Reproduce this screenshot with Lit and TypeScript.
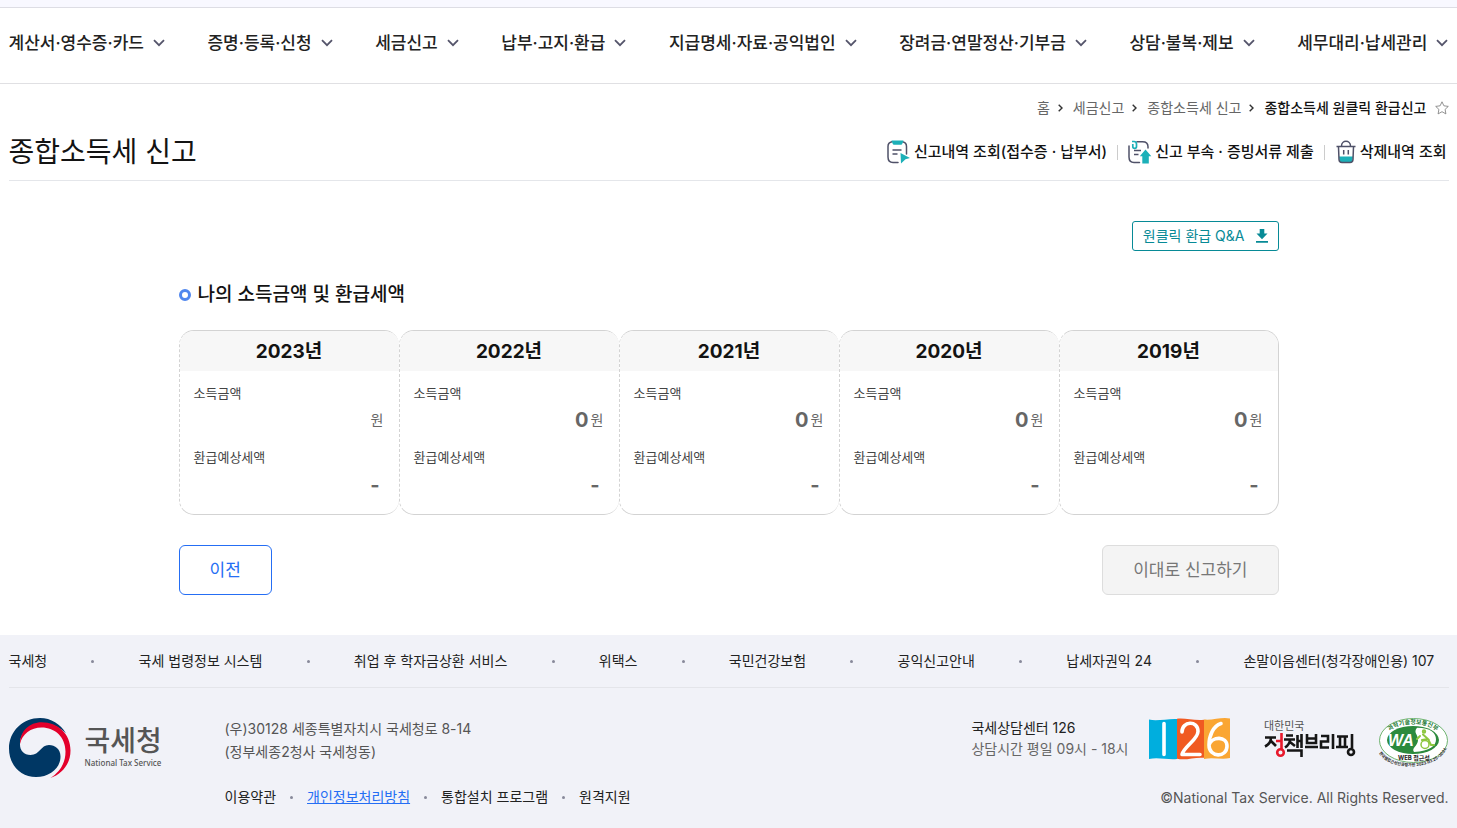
import { LitElement, html, css } from "lit";
import { customElement } from "lit/decorators.js";

const MENU = ["계산서·영수증·카드", "증명·등록·신청", "세금신고", "납부·고지·환급", "지급명세·자료·공익법인", "장려금·연말정산·기부금", "상담·불복·제보", "세무대리·납세관리"];
const CRUMBS = ["홈", "세금신고", "종합소득세 신고"];
const YEARS = [
  { year: 2023, income: "" },
  { year: 2022, income: "0" },
  { year: 2021, income: "0" },
  { year: 2020, income: "0" },
  { year: 2019, income: "0" },
];
const SITES = ["국세청", "국세 법령정보 시스템", "취업 후 학자금상환 서비스", "위택스", "국민건강보험", "공익신고안내", "납세자권익 24", "손말이음센터(청각장애인용) 107"];
const POLICIES = ["이용약관", "개인정보처리방침", "통합설치 프로그램", "원격지원"];

const chevronDown = html`<svg width="12" height="8" viewBox="0 0 12 8" aria-hidden="true"><path d="M1 1.2 6 6.2 11 1.2" fill="none" stroke="#55556b" stroke-width="1.8"/></svg>`;
const chevronRight = html`<svg width="5" height="8" viewBox="0 0 5 8" aria-hidden="true"><path d="M.7.7 4 4 .7 7.3" fill="none" stroke="#333" stroke-width="1.4"/></svg>`;
const star = html`<svg width="14" height="14" viewBox="0 0 14 14" aria-hidden="true"><path d="M7 .8 8.9 4.8 13.3 5.4 10.1 8.4 10.9 12.9 7 10.7 3.1 12.9 3.9 8.4.7 5.4 5.1 4.8Z" fill="none" stroke="#777" stroke-width=".8" stroke-linejoin="round"/></svg>`;

const listIcon = html`<svg width="24" height="24" viewBox="0 0 24 24" aria-hidden="true">
  <path d="M5 1.8C2.2 2.3 1 4 1 6.5V17c0 3.600 1.700 5.500 5 5.500h5M15.500 1.800c2.800.5 4 2.200 4 4.700v7.500" fill="none" stroke="#4f5168" stroke-width="1.500" stroke-linecap="round"/>
  <path d="M4.500.5h12l-1.200 3.200c-.3.800-.8 1.100-1.600 1.100H7.300c-.8 0-1.300-.3-1.600-1.100Z" fill="#1cb0b8"/>
  <path d="M5.500 10h9M5.500 14h5" stroke="#4f5168" stroke-width="1.500"/>
  <path d="M13.500 13 23 18 18.500 19.300 14 23.500Z" fill="#1cb0b8"/></svg>`;
const uploadIcon = html`<svg width="24" height="24" viewBox="0 0 24 24" aria-hidden="true">
  <path d="M9 1.800h5.500c3.600 0 5.500 1.600 5.500 5v1.200M1 6V17c0 3.600 1.700 5.500 5 5.500h5.500" fill="none" stroke="#4f5168" stroke-width="1.500" stroke-linecap="round"/>
  <path d="M4 1.500h2C8 1.500 8.500 2.500 8.500 4v2.500c0 2.500-3.700 2.500-3.700 0V4" fill="none" stroke="#1cb0b8" stroke-width="1.700"/>
  <path d="M6 10.500H13M6 14.500h4.500" stroke="#4f5168" stroke-width="1.500"/>
  <path d="M17.500 9.500 23.300 16.200H20.800V23.500H14.300V16.200H11.800Z" fill="#1cb0b8"/></svg>`;
const trashIcon = html`<svg width="22" height="24" viewBox="-1 0 22 24" aria-hidden="true">
  <path d="M3 16.500h14l-.6 4.500c-.2 1.200-.8 1.700-2 1.700H5.600c-1.200 0-1.800-.5-2-1.700Z" fill="#1cb0b8"/>
  <path d="M.5 6.500h19M5.500 6C5.500-.2 14.500-.2 14.500 6M2.500 7 3 19.500c.1 2.200 1 3.100 3 3.100h8c2 0 2.900-.9 3-3.100L17.500 7M7.700 10v4.500M12.300 10v4.500" fill="none" stroke="#4f5168" stroke-width="1.500"/></svg>`;
const downloadIcon = html`<svg width="12" height="14" viewBox="0 0 12 14" aria-hidden="true"><path d="M3.700 0h4.600v4.600h3.200L6 10.200.5 4.600h3.200ZM0 12h12v1.700H0Z" fill="#078a96"/></svg>`;

const emblem = html`<svg width="62" height="60" viewBox="0 0 62 60" aria-hidden="true">
  <path d="M31 0C14 0 0 13 0 30.500 0 47 11.500 59 27 59c14 0 24.500-9 24.500-20.500C51.500 31 46 27 40 27c-8.500 0-9 10-18.500 10C15 37 11 32.500 11 26.500 11 14.500 20 6 32.500 5.500c10-.4 18 3.500 24.500 10C51.500 6 42 0 31 0Z" fill="#003764"/>
  <path d="M11 26C11 13 20.500 4.300 32.500 4.300 49 4.300 61.500 16 61.500 32.500 61.500 46 53 56 41.500 60 50 54.500 56.500 46 56.500 33.500 56.500 19 46 9.500 32.500 9.500 22 9.500 13 16 11 26Z" fill="#e4002b"/></svg>`;

const hotline = html`<svg width="82" height="42" viewBox="0 0 82 42" role="img" aria-label="126">
  <path d="M0 1.500c8 2 18-1 28-.5v40c-9 1-19-2-28 0Z" fill="#00aede"/>
  <path d="M28 .8c8-1 17 2 27 1v38c-9-1-18 3-27 1Z" fill="#f05a22"/>
  <path d="M55 1.500c9 1 18-3 26-1v39.500c-8 2-17-1-26 1Z" fill="#faa633"/>
  <path d="M15 5.500v31M33 14C33 3 49 2 49 13.500c0 8-14 15-16 23h18M72 5.500C64 8 60 18 60 27c0 13 18 13 18 1C78 18 63 18 60 27" fill="none" stroke="#fff" stroke-width="3.600" stroke-linecap="round" stroke-linejoin="round"/></svg>`;

const briefing = html`<svg width="92" height="40" viewBox="0 -2 92 40" role="img" aria-label="대한민국 정책브리핑">
  <text x="0" y="10" font-size="11" fill="#555">대한민국</text>
  <g fill="none" stroke="#161616" stroke-width="2.600">
    <path d="M1 17.500h11M7 17.500c0 4-2 7-6 9M7 21l5 5M22 15.500h7M20 19.500h11M26 19.500c0 4-2 6-5 8M26 22l5 4M33.500 15v13M37.500 14v14M33.500 21h4M23 30.500h14.500v6.500M43 14v9h9v-9M43 18.500h9M41 27h13M57 16h7v5.500h-7v6h8M69 14v15M73 16.500h11M76 16.500v10M81 16.500v10M72 27h12M88 14v14"/>
    <circle cx="87" cy="32" r="3"/></g>
  <g fill="none" stroke="#e8192c" stroke-width="2.600"><path d="M12 21h5M17.500 13v16"/><circle cx="16.500" cy="32.500" r="3.300"/></g></svg>`;

const waMark = html`<svg width="72" height="50" viewBox="0 0 72 50" role="img" aria-label="과학기술정보통신부 WEB 접근성">
  <defs><path id="arc-top" d="M9 18C16 2 56 2 63 18"/><path id="arc-low" d="M2 35C13 54 60 53 70 30"/></defs>
  <ellipse cx="36.500" cy="22.500" rx="34" ry="22" fill="#fff" stroke="#4da24d" stroke-width=".8"/>
  <ellipse cx="36" cy="22" rx="26" ry="14" fill="#2c8a3d"/>
  <path d="M40 9.800C54 9.800 59 15 59 21.500S53 33 37 34C34 30 41 28 41 22S36 15 40 9.800Z" fill="#fff"/>
  <g fill="none" stroke="#8dc63f" stroke-width="2" stroke-linecap="round"><circle cx="47" cy="13.500" r="1.200"/><path d="M46 16.500 51 21l-6 1M51 21l3 6h3M43 18l-3 3"/><circle cx="48" cy="26.500" r="4" stroke-width="1.500"/></g>
  <text x="11" y="28" font-size="16" font-weight="700" font-style="italic" fill="#fff" font-family="Liberation Sans, sans-serif">WA</text>
  <text font-size="6" fill="#237a35" font-weight="700"><textPath href="#arc-top" startOffset="6">과학기술정보통신부</textPath></text>
  <text x="21" y="42" font-size="6" font-weight="700" fill="#222">WEB 접근성</text>
  <text font-size="4" font-weight="700" fill="#222"><textPath href="#arc-low">한국웹접근성인증평가원 2023.03.25~2024.03</textPath></text></svg>`;

@customElement("app-root")
export class AppRoot extends LitElement {
  static styles = css`
    :host { display: block; color: #131313; font: 400 14px/20px Inter, "Noto Sans CJK KR", sans-serif; }
    *, *::before { box-sizing: border-box; }
    a { color: inherit; text-decoration: none; }
    h1, h2, h3, p, ul, ol, dl, dd { margin: 0; padding: 0; }
    ul, ol { list-style: none; }
    svg { display: block; flex: none; overflow: visible; }
    button { font: inherit; cursor: pointer; }
    .wrap { max-width: 1456px; margin: 0 auto; padding: 0 8px; }
    .strip { height: 8px; background: #f8f8ff; border-bottom: 1px solid #dddde4; }
    .gnb { border-bottom: 1px solid #e0e0e3; }
    .menu { display: flex; justify-content: space-between; padding-top: 20px; padding-bottom: 25px; }
    .menu button { display: flex; align-items: center; gap: 9px; padding: 0; border: 0; background: none; color: #222; font-size: 17px; font-weight: 500; line-height: 30px; white-space: nowrap; }
    .crumbs { display: flex; justify-content: flex-end; align-items: center; gap: 10px; padding-top: 14px; color: #666; }
    .crumbs li { display: flex; align-items: center; gap: 8px; }
    .current { color: #131313; font-weight: 500; }
    .fav { padding: 0; border: 0; background: none; }
    .title { display: flex; justify-content: space-between; align-items: center; padding: 14px 0 8px; border-bottom: 1px solid #e4e6ea; }
    h1 { font-size: 28px; font-weight: 400; line-height: 40px; }
    .actions { display: flex; align-items: center; }
    .actions a { display: flex; align-items: center; gap: 3px; padding: 0 2px 0 10px; font-size: 15px; font-weight: 500; white-space: nowrap; }
    .actions li { display: flex; align-items: center; }
    .actions li + li::before { content: ""; width: 1px; height: 15px; margin-left: 8px; background: #ccc; }
    .main { max-width: 1116px; margin: 0 auto; padding: 40px 8px; }
    .qna { display: flex; align-items: center; gap: 11px; height: 30px; margin-left: auto; padding: 0 10px; border: 1px solid #078a96; border-radius: 3px; background: #fff; color: #078a96; }
    h2 { display: flex; align-items: center; gap: 7px; margin: 29px 0 20px; font-size: 19px; font-weight: 500; line-height: 30px; }
    h2::before { content: ""; width: 12px; height: 12px; border: 3px solid #4f86ee; border-radius: 50%; }
    .years { display: grid; grid-template-columns: repeat(5, 1fr); }
    .card { overflow: hidden; border: 1px solid #d3d3d3; border-left-style: dashed; border-right: 0; border-radius: 15px; }
    .card:last-child { border-right: 1px solid #d3d3d3; }
    h3 { padding-top: 2px; background: #f7f7f7; font-size: 19px; font-weight: 700; line-height: 38px; text-align: center; }
    .figures { padding: 12px 15px 11px 14px; }
    dt { color: #444; font-size: 13px; }
    dd { display: flex; justify-content: flex-end; align-items: center; gap: 2px; height: 34px; color: #666; }
    .income { margin-bottom: 10px; }
    .refund { height: 36px; padding-right: 4px; }
    .num { font-size: 20px; font-weight: 700; }
    .buttons { display: flex; justify-content: space-between; margin-top: 30px; }
    .btn { height: 50px; padding: 0 30px; border: 1px solid #256ef4; border-radius: 6px; background: #fff; color: #256ef4; font-size: 17px; }
    .btn:disabled { border-color: #ddd; background: #f4f4f4; color: #777; cursor: default; }
    .footer { background: #f1f2f8; color: #222; }
    .sites { display: flex; justify-content: space-between; align-items: center; padding: 16px 14px 16px 0; border-bottom: 1px solid #e4e5ea; white-space: nowrap; }
    .dot { width: 3px; height: 3px; border-radius: 50%; background: #88899a; }
    .info { display: flex; align-items: flex-start; padding: 29px 0 20px; }
    .brand { display: flex; gap: 14px; width: 216px; padding-top: 1px; color: #555; }
    .name { padding-top: 7px; }
    .ko { font-size: 28px; font-weight: 500; line-height: 32px; }
    .en { font: 500 8px/12px "Noto Sans", sans-serif; }
    .address { color: #555; line-height: 23px; }
    .policies { display: flex; align-items: center; gap: 14px; margin-top: 24px; }
    .link { color: #256ef4; text-decoration: underline; }
    .contact { flex: 1; }
    .row { display: flex; justify-content: flex-end; }
    .row svg { margin-top: 1px; }
    .call { color: #666; line-height: 21px; margin-right: 20px; }
    .call strong { display: block; color: #222; font-weight: 400; }
    .logo126 { margin-right: 33px; }
    .brief { margin-right: 21px; }
    .copy { margin-top: 20px; color: #555; text-align: right; }
  `;

  render() {
    return html`
      <header>
        <div class="strip"></div>
        <div class="gnb"><nav class="wrap menu" aria-label="주 메뉴">${MENU.map((m) => html`<button type="button">${m}${chevronDown}</button>`)}</nav></div>
      </header>
      <div class="wrap">
        <ol class="crumbs">
          ${CRUMBS.map((c) => html`<li><a href="#">${c}</a>${chevronRight}</li>`)}
          <li class="current">종합소득세 원클릭 환급신고 <button class="fav" type="button" aria-label="즐겨찾기">${star}</button></li>
        </ol>
        <div class="title">
          <h1>종합소득세 신고</h1>
          <ul class="actions">
            <li><a href="#">${listIcon}신고내역 조회(접수증 · 납부서)</a></li>
            <li><a href="#">${uploadIcon}신고 부속 · 증빙서류 제출</a></li>
            <li><a href="#">${trashIcon}삭제내역 조회</a></li>
          </ul>
        </div>
      </div>
      <main class="main">
        <button class="qna" type="button">원클릭 환급 Q&amp;A ${downloadIcon}</button>
        <h2>나의 소득금액 및 환급세액</h2>
        <div class="years">
          ${YEARS.map((y) => html`<section class="card">
            <h3>${y.year}년</h3>
            <dl class="figures">
              <dt>소득금액</dt>
              <dd class="income"><span class="num">${y.income}</span>원</dd>
              <dt>환급예상세액</dt>
              <dd class="refund"><span class="num">-</span></dd>
            </dl>
          </section>`)}
        </div>
        <div class="buttons">
          <button class="btn" type="button">이전</button>
          <button class="btn" type="button" disabled>이대로 신고하기</button>
        </div>
      </main>
      <footer class="footer">
        <div class="wrap">
          <div class="sites">${SITES.map((s, i) => html`${i ? html`<span class="dot"></span>` : ""}<a href="#">${s}</a>`)}</div>
          <div class="info">
            <div class="brand">${emblem}<div class="name"><div class="ko">국세청</div><div class="en">National Tax Service</div></div></div>
            <div>
              <p class="address">(우)30128 세종특별자치시 국세청로 8-14<br>(정부세종2청사 국세청동)</p>
              <div class="policies">${POLICIES.map((p, i) => html`${i ? html`<span class="dot"></span>` : ""}<a href="#" class=${i === 1 ? "link" : ""}>${p}</a>`)}</div>
            </div>
            <div class="contact">
              <div class="row">
                <p class="call"><strong>국세상담센터 126</strong>상담시간 평일 09시 - 18시</p>
                <div class="logo126">${hotline}</div>
                <div class="brief">${briefing}</div>
                ${waMark}
              </div>
              <p class="copy">©National Tax Service. All Rights Reserved.</p>
            </div>
          </div>
        </div>
      </footer>
    `;
  }
}
